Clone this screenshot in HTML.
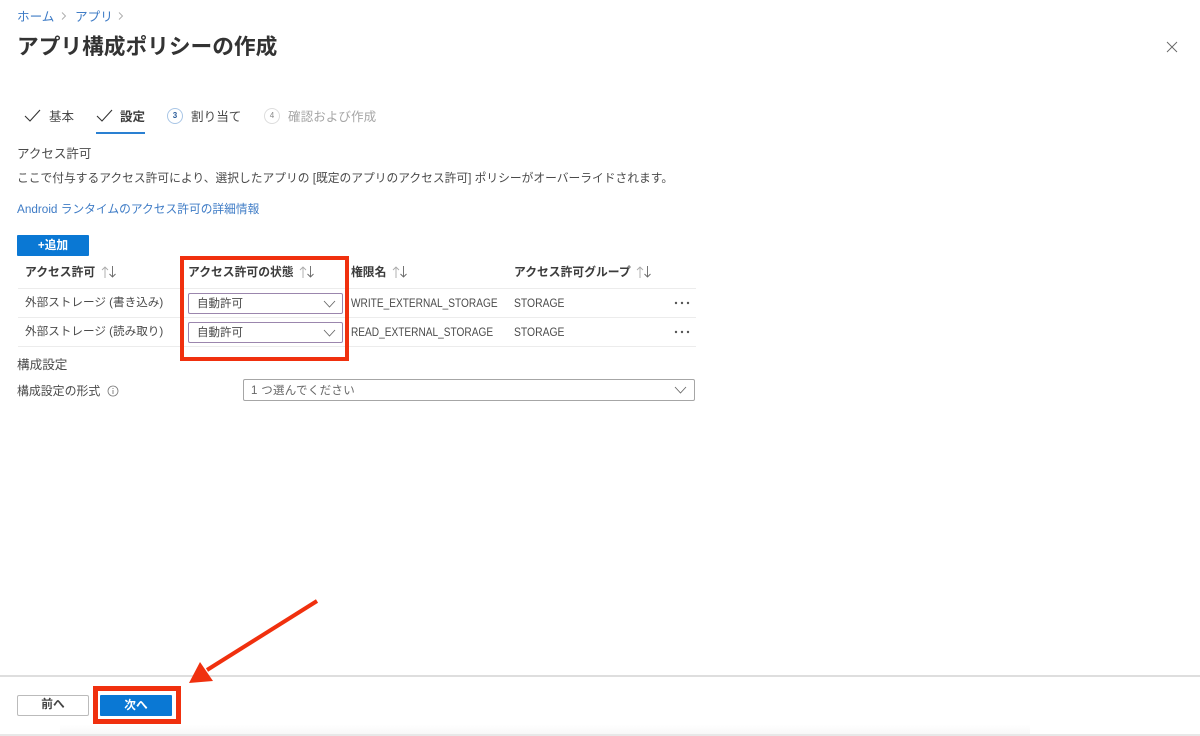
<!DOCTYPE html>
<html lang="ja"><head><meta charset="utf-8"><style>
html,body{margin:0;padding:0;background:#fff}
#p{position:relative;width:1200px;height:736px;overflow:hidden;background:#fff;font-family:"Liberation Sans","Noto Sans CJK JP",sans-serif;color:#4a4a4a;filter:blur(.3px)}
.t{position:absolute;white-space:nowrap;line-height:16px;font-size:11.7px}
.b{font-weight:700;color:#3c3c3c;font-size:11.8px}
.l{color:#3f7cc6}
.sx{transform:scaleX(.88);transform-origin:0 50%}
.sy{transform:scaleX(.9);transform-origin:0 50%}
.box{position:absolute;box-sizing:border-box;background:#fff;border:1px solid #8a8886;border-radius:2px}
.ln{position:absolute;height:1px;background:#ececec;left:18px;width:678px}
svg{position:absolute;overflow:visible}
</style></head><body><div id="p">
<div class="t l" style="left:17px;top:9px;font-size:12.6px">ホーム</div>
<svg style="left:0;top:0" width="140" height="24"><path d="M62 12.5l3.5 3.5-3.5 3.5M119 12.5l3.5 3.5-3.5 3.5" fill="none" stroke="#aaa" stroke-width=".9"/></svg>
<div class="t l" style="left:75px;top:9px;font-size:12.6px">アプリ</div>
<div class="t" style="left:17px;top:34px;font-size:21.7px;line-height:26px;font-weight:700;color:#333">アプリ構成ポリシーの作成</div>
<svg style="left:1166px;top:41px" width="12" height="12"><path d="M1 1l10 10M11 1L1 11" stroke="#666" stroke-width=".9" fill="none"/></svg>

<svg style="left:24px;top:109px" width="18" height="14"><path d="M1 7l5 5L16 1" fill="none" stroke="#333" stroke-width="1.1"/></svg>
<div class="t" style="left:49px;top:109px;font-size:12.5px">基本</div>
<svg style="left:96px;top:109px" width="18" height="14"><path d="M1 7l5 5L16 1" fill="none" stroke="#333" stroke-width="1.1"/></svg>
<div class="t b" style="left:120px;top:109px;font-size:12.5px">設定</div>
<div style="position:absolute;left:96px;top:132px;width:49px;height:2px;background:#2a80d2"></div>
<div style="position:absolute;box-sizing:border-box;left:167px;top:108px;width:16px;height:16px;border:1px solid #a9c6e6;border-radius:50%;font-size:8px;line-height:14px;text-align:center;color:#2a5c9a;font-weight:700">3</div>
<div class="t" style="left:191px;top:109px;font-size:12.6px">割り当て</div>
<div style="position:absolute;box-sizing:border-box;left:264px;top:108px;width:16px;height:16px;border:1px solid #ddd;border-radius:50%;font-size:8px;line-height:14px;text-align:center;color:#888">4</div>
<div class="t" style="left:288px;top:109px;font-size:12.6px;color:#a6a6a6">確認および作成</div>

<div class="t" style="left:17px;top:146px;font-size:12.5px">アクセス許可</div>
<div class="t" style="left:17px;top:171px;font-size:11.75px;width:660px">ここで付与するアクセス許可により、選択したアプリの [既定のアプリのアクセス許可] ポリシーがオーバーライドされます。</div>
<div class="t l" style="left:17px;top:202px;font-size:11.74px">Android ランタイムのアクセス許可の詳細情報</div>

<div style="position:absolute;left:17px;top:235px;width:72px;height:21px;background:#0a78d4;border-radius:1px;color:#fff;font-size:11.7px;font-weight:700;line-height:21px;text-align:center">+追加</div>

<div class="t b" style="left:25px;top:264px">アクセス許可</div>
<div class="t b" style="left:188px;top:264px">アクセス許可の状態</div>
<div class="t b" style="left:351px;top:264px">権限名</div>
<div class="t b" style="left:514px;top:264px">アクセス許可グループ</div>
<svg style="left:0;top:0" width="700" height="290"><g fill="none" stroke-width=".9"><path d="M105 278v-11M102 270l3-3 3 3" stroke="#aaa"/><path d="M112.500 266v11M109.500 274l3 3 3-3" stroke="#666"/><path d="M303 278v-11M300 270l3-3 3 3" stroke="#aaa"/><path d="M310.500 266v11M307.500 274l3 3 3-3" stroke="#666"/><path d="M396 278v-11M393 270l3-3 3 3" stroke="#aaa"/><path d="M403.500 266v11M400.500 274l3 3 3-3" stroke="#666"/><path d="M640 278v-11M637 270l3-3 3 3" stroke="#aaa"/><path d="M647.500 266v11M644.500 274l3 3 3-3" stroke="#666"/></g></svg>

<div class="ln" style="top:288px"></div>
<div class="ln" style="top:317px"></div>
<div class="ln" style="top:346px"></div>

<div class="t" style="left:25px;top:295px;font-size:11.6px">外部ストレージ (書き込み)</div>
<div class="t" style="left:25px;top:324px;font-size:11.6px">外部ストレージ (読み取り)</div>

<div class="box" style="left:188px;top:293px;width:155px;height:21px;border-color:#9b86ad"></div>
<div class="box" style="left:188px;top:322px;width:155px;height:21px;border-color:#9b86ad"></div>
<div class="t" style="left:197px;top:296px;font-size:11.5px">自動許可</div>
<div class="t" style="left:197px;top:325px;font-size:11.5px">自動許可</div>
<svg style="left:324px;top:300px" width="12" height="8"><path d="M0 1l5.500 6L11 1" fill="none" stroke="#666" stroke-width=".9"/></svg>
<svg style="left:324px;top:329px" width="12" height="8"><path d="M0 1l5.500 6L11 1" fill="none" stroke="#666" stroke-width=".9"/></svg>

<div class="t sx" style="left:351px;top:296px;font-size:11.5px">WRITE_EXTERNAL_STORAGE</div>
<div class="t sx" style="left:351px;top:325px;font-size:11.5px">READ_EXTERNAL_STORAGE</div>
<div class="t sy" style="left:514px;top:296px;font-size:11.5px">STORAGE</div>
<div class="t sy" style="left:514px;top:325px;font-size:11.5px">STORAGE</div>
<svg style="left:674px;top:300px" width="18" height="34"><g fill="#555"><circle cx="2" cy="3" r="1.200"/><circle cx="8" cy="3" r="1.200"/><circle cx="14" cy="3" r="1.200"/><circle cx="2" cy="32" r="1.200"/><circle cx="8" cy="32" r="1.200"/><circle cx="14" cy="32" r="1.200"/></g></svg>

<div style="position:absolute;box-sizing:border-box;left:180px;top:256px;width:169px;height:105px;border:4px solid #f0300e"></div>

<div class="t" style="left:17px;top:357px;font-size:12.6px">構成設定</div>
<div class="t" style="left:17px;top:383px;font-size:11.9px">構成設定の形式</div>
<svg style="left:107px;top:385px" width="12" height="12"><circle cx="6" cy="6" r="5" fill="none" stroke="#777" stroke-width=".8"/><path d="M6 5v4M6 3v1" stroke="#777" stroke-width=".9"/></svg>
<div class="box" style="left:243px;top:379px;width:452px;height:22px;border-color:#a6a6a6"></div>
<div class="t" style="left:251px;top:383px;font-size:11.5px;color:#666;letter-spacing:.3px">1 つ選んでください</div>
<svg style="left:675px;top:386px" width="12" height="8"><path d="M0 1l5.500 6L11 1" fill="none" stroke="#666" stroke-width=".9"/></svg>

<div style="position:absolute;left:0;top:675px;width:1200px;height:2px;background:#dedede"></div>
<div style="position:absolute;left:0;top:734px;width:1200px;height:2px;background:#e8e8e8"></div>
<div style="position:absolute;left:60px;top:724px;width:970px;height:10px;background:linear-gradient(#fff,#f8f8f8)"></div>

<div class="box" style="left:17px;top:695px;width:72px;height:21px;line-height:18px;text-align:center;font-size:11.7px;font-weight:700;color:#444;border-color:#bbb">前へ</div>
<div style="position:absolute;box-sizing:border-box;left:93px;top:686px;width:88px;height:38px;border:5px solid #f0300e;background:#fff"></div>
<div style="position:absolute;left:100px;top:695px;width:72px;height:21px;background:#0a78d4;border-radius:1px;color:#fff;font-size:11.7px;font-weight:700;line-height:21px;text-align:center">次へ</div>

<svg style="left:0;top:0" width="1200" height="736"><path d="M317 601L207 670" stroke="#f0300e" stroke-width="4" fill="none"/><path d="M189 683L200 662 213 681Z" fill="#f0300e"/></svg>
</div></body></html>
